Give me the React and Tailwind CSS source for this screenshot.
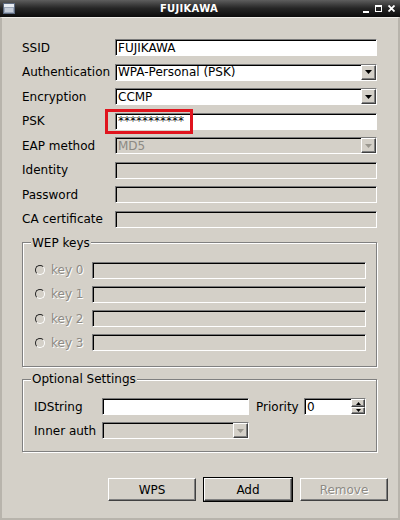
import React from 'react';

const sunken =
  'border border-t-[#7a7a7a] border-l-[#7a7a7a] border-b-white border-r-white shadow-[inset_1px_1px_0_#000]';
const raised =
  'border border-t-white border-l-white border-b-[#404040] border-r-[#404040] shadow-[inset_-1px_-1px_0_#808080]';
const dimText = 'text-[#8d8a84] [text-shadow:1px_1px_0_#fff]';

const Field = ({ value, disabled, className = '' }) => (
  <div
    className={`h-[17px] flex items-center pl-[2px] ${sunken} ${disabled ? 'bg-[#d4d0c8]' : 'bg-white'} ${className}`}
  >
    {value}
  </div>
);

const Arrow = ({ disabled }) => (
  <div className={`w-[15px] h-full flex items-center justify-center bg-[#d4d0c8] ${raised}`}>
    <svg width="7" height="4" viewBox="0 0 7 4">
      <path d="M0 0h7L3.5 4z" fill={disabled ? '#9a978f' : '#000'} />
    </svg>
  </div>
);

const Combo = ({ value, disabled, className = '' }) => (
  <div
    className={`h-[17px] flex items-stretch ${sunken} ${disabled ? 'bg-[#d4d0c8]' : 'bg-white'} ${className}`}
  >
    <div className={`flex-1 flex items-center pl-[2px] ${disabled ? 'text-[#8d8a84]' : ''}`}>{value}</div>
    <Arrow disabled={disabled} />
  </div>
);

const Row = ({ label, children }) => (
  <div className="flex items-center h-[17px]">
    <div className="w-[93px] shrink-0">{label}</div>
    <div className="flex-1">{children}</div>
  </div>
);

const Radio = () => (
  <div className="w-[10px] h-[10px] rounded-full border-[1.5px] border-t-[#222] border-l-[#222] border-b-white border-r-white bg-[#d4d0c8]" />
);

const Group = ({ title, className = '', legend = '', children }) => (
  <fieldset
    className={`border border-[#808080] shadow-[inset_1px_1px_0_#fff,1px_1px_0_#fff] ${className}`}
  >
    <legend className={`px-[1px] bg-[#d4d0c8] leading-[14px] ${legend}`}>{title}</legend>
    {children}
  </fieldset>
);

const Btn = ({ children, focus, disabled }) => (
  <div
    className={`w-[88px] h-[23px] flex items-center justify-center bg-[#d4d0c8] ${focus ? 'outline outline-1 outline-black' : ''} ${raised} ${disabled ? dimText : ''}`}
  >
    {children}
  </div>
);

export default function App() {
  return (
    <div className="w-[400px] h-[520px] flex flex-col bg-[#d4d0c8] font-['DejaVu_Sans',sans-serif] text-[12px] text-black overflow-hidden">
      {/* title bar */}
      <div className="h-[17px] shrink-0 flex items-center bg-linear-to-b from-[#5e5e5e] via-[#252525] to-[#0c0c0c] px-[3px]">
        <svg width="12" height="11" viewBox="0 0 12 11">
          <rect x="0.5" y="0.5" width="11" height="10" fill="#9aa6b8" stroke="#5d6a80" />
          <rect x="1" y="1" width="10" height="3" fill="#e8ecf2" />
          <rect x="2" y="5" width="8" height="4" fill="#c4ccd8" />
        </svg>
        <div className="flex-1 text-center text-white font-bold text-[10px] tracking-[0.3px]">FUJIKAWA</div>
        <div className="flex items-center gap-[5px] pr-[2px]">
          <svg width="6" height="8" viewBox="0 0 6 8">
            <rect x="0" y="6" width="6" height="2" fill="#fff" />
          </svg>
          <svg width="7" height="7" viewBox="0 0 7 7" className="ml-[1px]">
            <rect x="0.5" y="0.5" width="6" height="6" fill="none" stroke="#fff" />
            <rect x="0" y="0" width="7" height="2" fill="#fff" />
          </svg>
          <svg width="7" height="7" viewBox="0 0 7 7" className="ml-[1px]">
            <path d="M0.5 0.5l6 6M6.5 0.5l-6 6" stroke="#fff" strokeWidth="1.8" />
          </svg>
        </div>
      </div>

      {/* body */}
      <div className="flex-1 flex flex-col border-x-2 border-b-2 border-[#b8b4ac] border-t border-t-[#efede8]">
        <div className="flex flex-col gap-[7.5px] pl-[20px] pr-[21px] pt-[21px]">
          <Row label="SSID">
            <Field value="FUJIKAWA" />
          </Row>
          <Row label="Authentication">
            <Combo value="WPA-Personal (PSK)" />
          </Row>
          <Row label="Encryption">
            <Combo value="CCMP" />
          </Row>
          <Row label="PSK">
            <div className="relative">
              <Field value="***********" />
              <div className="absolute left-[-10px] top-[-4px] w-[88px] h-[25px] border-[3px] border-[#e0141e]" />
            </div>
          </Row>
          <Row label="EAP method">
            <Combo value="MD5" disabled />
          </Row>
          <Row label="Identity">
            <Field disabled />
          </Row>
          <Row label="Password">
            <Field disabled />
          </Row>
          <Row label="CA certificate">
            <Field disabled />
          </Row>
        </div>

        <Group
          title="WEP keys"
          legend="ml-[-4px]"
          className="mt-[8px] ml-[20px] mr-[21px] pl-[12px] pr-[10px] pt-[12px] pb-[15px]"
        >
          <div className="flex flex-col gap-[7.3px]">
            {[0, 1, 2, 3].map((k) => (
              <div key={k} className="flex items-center h-[17px]">
                <Radio />
                <span className={`ml-[6px] w-[41px] ${dimText}`}>key {k}</span>
                <Field disabled className="flex-1" />
              </div>
            ))}
          </div>
        </Group>

        <Group
          title="Optional Settings"
          legend="ml-[-3px]"
          className="mt-[5px] ml-[20px] mr-[21px] pl-[11px] pr-[10px] pt-[12px] pb-[12px]"
        >
          <div className="flex flex-col gap-[7px]">
            <div className="flex items-center h-[17px]">
              <span className="w-[68px]">IDString</span>
              <Field className="w-[147px]" />
              <span className="ml-[7px] w-[48px]">Priority</span>
              <div className={`h-[17px] w-[62px] flex items-stretch bg-white ${sunken}`}>
                <div className="flex-1 flex items-center pl-[2px]">0</div>
                <div className="w-[14px] flex flex-col">
                  <div className={`flex-1 flex items-center justify-center bg-[#d4d0c8] ${raised}`}>
                    <svg width="5" height="3" viewBox="0 0 5 3"><path d="M0 3h5L2.5 0z" fill="#000" /></svg>
                  </div>
                  <div className={`flex-1 flex items-center justify-center bg-[#d4d0c8] ${raised}`}>
                    <svg width="5" height="3" viewBox="0 0 5 3"><path d="M0 0h5L2.5 3z" fill="#000" /></svg>
                  </div>
                </div>
              </div>
            </div>
            <div className="flex items-center h-[17px]">
              <span className="w-[68px]">Inner auth</span>
              <Combo disabled className="w-[147px]" />
            </div>
          </div>
        </Group>

        <div className="flex justify-end gap-[8px] pr-[10px] mt-[26px]">
          <Btn>WPS</Btn>
          <Btn focus>Add</Btn>
          <Btn disabled>Remove</Btn>
        </div>
      </div>
    </div>
  );
}
